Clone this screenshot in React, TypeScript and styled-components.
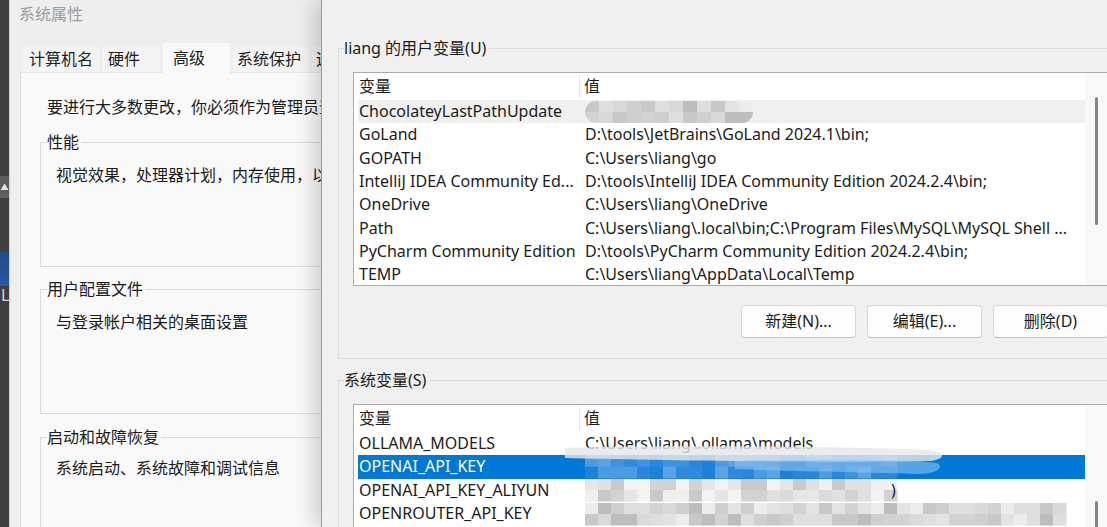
import React from "react";
import styled, { createGlobalStyle } from "styled-components";

const GlobalStyle = createGlobalStyle`
  html, body { margin: 0; padding: 0; }
  body {
    width: 1107px; height: 527px; overflow: hidden; background: #3d3d3d;
    font-family: "Noto Sans", "Noto Sans CJK SC", sans-serif; color: #1b1b1b;
  }
  #root { width: 1107px; height: 527px; }
`;

const UI_FONT = `"Noto Sans", "Noto Sans CJK SC", sans-serif`;

/* ---------- layout shells ---------- */
const Screen = styled.div`
  display: flex;
  width: 1107px;
  height: 527px;
  overflow: hidden;
`;

const DesktopStrip = styled.div`
  width: 9px;
  flex: none;
  background: #3f3f3f;
  border-right: 1px solid #cfcfcf;
  display: flex;
  flex-direction: column;
  overflow: hidden;
`;

const StripButton = styled.div`
  margin-top: 176px;
  height: 22px;
  background: #5d5d5d;
  color: #e8e8e8;
  font-size: 8px;
  line-height: 22px;
  text-align: center;
`;

const StripBlue = styled.div`
  margin-top: 54px;
  height: 34px;
  background: linear-gradient(#1f4b8e, #2a5aa6);
`;

const StripLetter = styled.div`
  color: #d8d8d8;
  font-size: 16px;
  line-height: 18px;
  padding-left: 1px;
`;

/* ---------- system properties window (behind) ---------- */
const SysWindow = styled.div`
  width: 311px;
  flex: none;
  background: #eeeeee;
  display: flex;
  flex-direction: column;
  overflow: hidden;
  font-family: ${UI_FONT};
`;

const SysTitle = styled.div`
  height: 28px;
  line-height: 28px;
  padding-left: 9px;
  font-size: 16px;
  color: #9c9c9c;
`;

const TabStrip = styled.div`
  margin-top: 15px;
  height: 29px;
  padding-left: 12px;
  display: flex;
  align-items: flex-end;
  gap: 3px;
`;

const Tab = styled.div<{ $w: number; $pl: number; $active?: boolean }>`
  flex: none;
  width: ${(p) => p.$w}px;
  height: ${(p) => (p.$active ? 30 : 25)}px;
  margin-bottom: ${(p) => (p.$active ? -1 : 0)}px;
  padding-left: ${(p) => p.$pl}px;
  box-sizing: border-box;
  background: ${(p) => (p.$active ? "#f9f9f9" : "#f3f3f3")};
  font-size: 16px;
  line-height: ${(p) => (p.$active ? 30 : 25)}px;
  color: #1e1e1e;
  white-space: nowrap;
  overflow: hidden;
  position: relative;
  z-index: ${(p) => (p.$active ? 1 : 0)};
`;

const TabPanel = styled.div`
  flex: 1;
  margin-left: 10px;
  width: 360px;
  background: #f9f9f9;
  border-left: 1px solid #dedede;
  border-top: 1px solid #e6e6e6;
  padding: 23px 0 0 26px;
  box-sizing: border-box;
`;

const PanelText = styled.div`
  font-size: 16px;
  line-height: 22px;
  white-space: nowrap;
`;

const SysGroup = styled.fieldset<{ $mt: number; $pt: number }>`
  margin: ${(p) => p.$mt}px 0 0 -7px;
  width: 360px;
  border: 1px solid #dcdcdc;
  border-right: none;
  padding: ${(p) => p.$pt}px 0 80px 15px;
  min-inline-size: 0;
`;

const SysLegend = styled.legend`
  margin-left: -9px;
  padding: 0 2px 0 0;
  font-size: 16px;
  line-height: 20px;
  white-space: nowrap;
`;

/* ---------- environment variables window (front) ---------- */
const EnvWindow = styled.div`
  flex: 1;
  background: #f0f0f0;
  border-left: 1px solid #9a9a9a;
  box-shadow: -8px 0 18px rgba(0, 0, 0, 0.16);
  position: relative;
  z-index: 2;
  padding: 38px 0 0 16px;
  overflow: hidden;
  font-family: ${UI_FONT};
`;

const EnvGroup = styled.fieldset<{ $mt: number }>`
  margin: ${(p) => p.$mt}px 0 0 0;
  width: 820px;
  border: 1px solid #dcdcdc;
  border-right: none;
  padding: 14px 0 20px 14px;
  min-inline-size: 0;
`;

const EnvLegend = styled.legend`
  margin-left: -9px;
  padding: 0 3px 0 0;
  font-size: 16px;
  line-height: 20px;
  color: #1b1b1b;
  white-space: nowrap;
`;

const ListBox = styled.div<{ $h: number }>`
  width: 755px;
  height: ${(p) => p.$h}px;
  box-sizing: border-box;
  background: #ffffff;
  border: 1px solid #aaaaaa;
  display: flex;
  overflow: hidden;
`;

const ListBody = styled.div`
  flex: 1;
  display: flex;
  flex-direction: column;
  padding-left: 4px;
  overflow: hidden;
`;

const HeaderRow = styled.div`
  display: grid;
  grid-template-columns: 222px 1fr;
  height: 27px;
  flex: none;
  align-items: start;
  font-size: 16px;
`;

const HeaderCell = styled.div<{ $divider?: boolean }>`
  height: 23px;
  margin-top: 2px;
  line-height: 23px;
  padding-left: ${(p) => (p.$divider ? 1 : 4)}px;
  border-right: ${(p) => (p.$divider ? "1px solid #e5e5e5" : "none")};
`;

const Row = styled.div<{ $bg?: string; $fg?: string }>`
  display: grid;
  grid-template-columns: 226px 1fr;
  height: 23.3px;
  flex: none;
  align-items: center;
  background: ${(p) => p.$bg ?? "transparent"};
  color: ${(p) => p.$fg ?? "#1b1b1b"};
  font-size: 16px;
  white-space: nowrap;
`;

const NameCell = styled.div`
  padding-left: 1px;
  overflow: hidden;
  line-height: 23px;
`;

const ValueCell = styled.div`
  padding-left: 1px;
  overflow: visible;
  line-height: 23px;
  display: flex;
  align-items: center;
  height: 23px;
`;

const ScrollTrack = styled.div`
  width: 22px;
  flex: none;
  background: #f8f8f8;
  display: flex;
  justify-content: center;
`;

const ScrollThumb = styled.div<{ $top: number; $h: number }>`
  margin-top: ${(p) => p.$top}px;
  width: 3px;
  height: ${(p) => p.$h}px;
  border-radius: 2px;
  background: #858585;
`;

const ButtonRow = styled.div`
  margin-top: 19px;
  width: 755px;
  display: flex;
  justify-content: flex-end;
  gap: 11px;
`;

const Button = styled.div`
  width: 115px;
  height: 33px;
  box-sizing: border-box;
  background: #fdfdfd;
  border: 1px solid #d6d6d6;
  border-bottom-color: #c4c4c4;
  border-radius: 4px;
  font-size: 16px;
  line-height: 31px;
  text-align: center;
  color: #1b1b1b;
`;

/* ---------- mosaic (pixelated redaction) ---------- */
function rand(seed: number) {
  let s = seed;
  return () => {
    s = (s * 9301 + 49297) % 233280;
    return s / 233280;
  };
}

type MosaicProps = {
  width: number;
  height: number;
  seed: number;
  palette: string[];
  cell?: number;
  rows?: number;
  rounded?: boolean;
  children?: React.ReactNode;
};

function Mosaic({ width, height, seed, palette, cell = 13, rows = 2, rounded, children }: MosaicProps) {
  const r = rand(seed);
  const cols = Math.ceil(width / cell);
  const rh = height / rows;
  const rects: React.ReactNode[] = [];
  for (let y = 0; y < rows; y++) {
    for (let x = 0; x < cols; x++) {
      const c = palette[Math.floor(r() * palette.length)];
      rects.push(
        <rect key={`${x}-${y}`} x={x * cell} y={y * rh} width={cell + 0.5} height={rh + 0.5} fill={c} />
      );
    }
  }
  return (
    <svg width={width} height={height} style={{ overflow: "visible", display: "block" }}>
      <defs>
        <clipPath id={`clip${seed}`}>
          <rect x={0} y={0} width={width} height={height} rx={rounded ? height / 2 : 0} />
        </clipPath>
      </defs>
      <g clipPath={rounded ? `url(#clip${seed})` : undefined}>{rects}</g>
      {children}
    </svg>
  );
}

const GREYS = ["#d9d9d9", "#cfcfcf", "#e3e3e3", "#c8c8c8", "#dedede", "#d3d3d3", "#ececec", "#bdbdbd"];
const LIGHT_GREYS = ["#e6e6e6", "#dadada", "#efefef", "#d2d2d2", "#f3f3f3", "#c9c9c9", "#e0e0e0"];
const BLUES = ["#2f8ade", "#3c93e0", "#1f80d8", "#4a9be2", "#2a86dc", "#5aa3e4"];

/* ---------- data ---------- */
const userVars: [string, string][] = [
  ["GoLand", "D:\\tools\\JetBrains\\GoLand 2024.1\\bin;"],
  ["GOPATH", "C:\\Users\\liang\\go"],
  ["IntelliJ IDEA Community Ed...", "D:\\tools\\IntelliJ IDEA Community Edition 2024.2.4\\bin;"],
  ["OneDrive", "C:\\Users\\liang\\OneDrive"],
  ["Path", "C:\\Users\\liang\\.local\\bin;C:\\Program Files\\MySQL\\MySQL Shell ..."],
  ["PyCharm Community Edition", "D:\\tools\\PyCharm Community Edition 2024.2.4\\bin;"],
  ["TEMP", "C:\\Users\\liang\\AppData\\Local\\Temp"],
];

export default function App() {
  return (
    <Screen>
      <GlobalStyle />
      <DesktopStrip>
        <StripButton>▲</StripButton>
        <StripBlue />
        <StripLetter>L</StripLetter>
      </DesktopStrip>

      <SysWindow>
        <SysTitle>系统属性</SysTitle>
        <TabStrip>
          <Tab $w={77} $pl={7}>计算机名</Tab>
          <Tab $w={58} $pl={6}>硬件</Tab>
          <Tab $w={67} $pl={10} $active>高级</Tab>
          <Tab $w={76} $pl={4}>系统保护</Tab>
          <Tab $w={40} $pl={4}>远程</Tab>
        </TabStrip>
        <TabPanel>
          <PanelText>要进行大多数更改，你必须作为管理员登录。</PanelText>
          <SysGroup $mt={14} $pt={12}>
            <SysLegend>性能</SysLegend>
            <PanelText>视觉效果，处理器计划，内存使用，以及虚拟内存</PanelText>
          </SysGroup>
          <SysGroup $mt={12} $pt={12}>
            <SysLegend>用户配置文件</SysLegend>
            <PanelText>与登录帐户相关的桌面设置</PanelText>
          </SysGroup>
          <SysGroup $mt={13} $pt={10}>
            <SysLegend>启动和故障恢复</SysLegend>
            <PanelText>系统启动、系统故障和调试信息</PanelText>
          </SysGroup>
        </TabPanel>
      </SysWindow>

      <EnvWindow>
        <EnvGroup $mt={0}>
          <EnvLegend>liang 的用户变量(U)</EnvLegend>
          <ListBox $h={214}>
            <ListBody>
              <HeaderRow>
                <HeaderCell $divider>变量</HeaderCell>
                <HeaderCell>值</HeaderCell>
              </HeaderRow>
              <Row $bg="#f0f0f0">
                <NameCell>ChocolateyLastPathUpdate</NameCell>
                <ValueCell>
                  <Mosaic width={168} height={22} seed={7} palette={GREYS} cell={14} rounded />
                </ValueCell>
              </Row>
              {userVars.map(([n, v]) => (
                <Row key={n}>
                  <NameCell>{n}</NameCell>
                  <ValueCell>{v}</ValueCell>
                </Row>
              ))}
            </ListBody>
            <ScrollTrack>
              <ScrollThumb $top={24} $h={128} />
            </ScrollTrack>
          </ListBox>
          <ButtonRow>
            <Button>新建(N)...</Button>
            <Button>编辑(E)...</Button>
            <Button>删除(D)</Button>
          </ButtonRow>
        </EnvGroup>

        <EnvGroup $mt={11}>
          <EnvLegend>系统变量(S)</EnvLegend>
          <ListBox $h={200}>
            <ListBody>
              <HeaderRow>
                <HeaderCell $divider>变量</HeaderCell>
                <HeaderCell>值</HeaderCell>
              </HeaderRow>
              <Row>
                <NameCell>OLLAMA_MODELS</NameCell>
                <ValueCell>C:\Users\liang\.ollama\models</ValueCell>
              </Row>
              <Row $bg="#0078d7" $fg="#ffffff">
                <NameCell>OPENAI_API_KEY</NameCell>
                <ValueCell>
                  <Mosaic width={300} height={23} seed={11} palette={BLUES} cell={13}>
                    <path
                      d="M-20 -7 C 60 -10, 250 -9, 345 -5 C 360 -3, 362 4, 345 6 C 250 8, 60 5, -20 3 Z"
                      fill="#e4e7ea"
                      opacity={0.82}
                    />
                    <path
                      d="M150 6 C 220 4, 330 4, 352 8 C 360 12, 352 20, 330 19 C 260 17, 190 16, 150 14 Z"
                      fill="#8ec2ee"
                      opacity={0.6}
                    />
                  </Mosaic>
                </ValueCell>
              </Row>
              <Row>
                <NameCell>OPENAI_API_KEY_ALIYUN</NameCell>
                <ValueCell>
                  <Mosaic width={306} height={22} seed={23} palette={LIGHT_GREYS} cell={13} />
                  <span>)</span>
                </ValueCell>
              </Row>
              <Row>
                <NameCell>OPENROUTER_API_KEY</NameCell>
                <ValueCell>
                  <Mosaic width={478} height={22} seed={41} palette={GREYS} cell={13} />
                </ValueCell>
              </Row>
            </ListBody>
            <ScrollTrack>
              <ScrollThumb $top={96} $h={60} />
            </ScrollTrack>
          </ListBox>
        </EnvGroup>
      </EnvWindow>
    </Screen>
  );
}
